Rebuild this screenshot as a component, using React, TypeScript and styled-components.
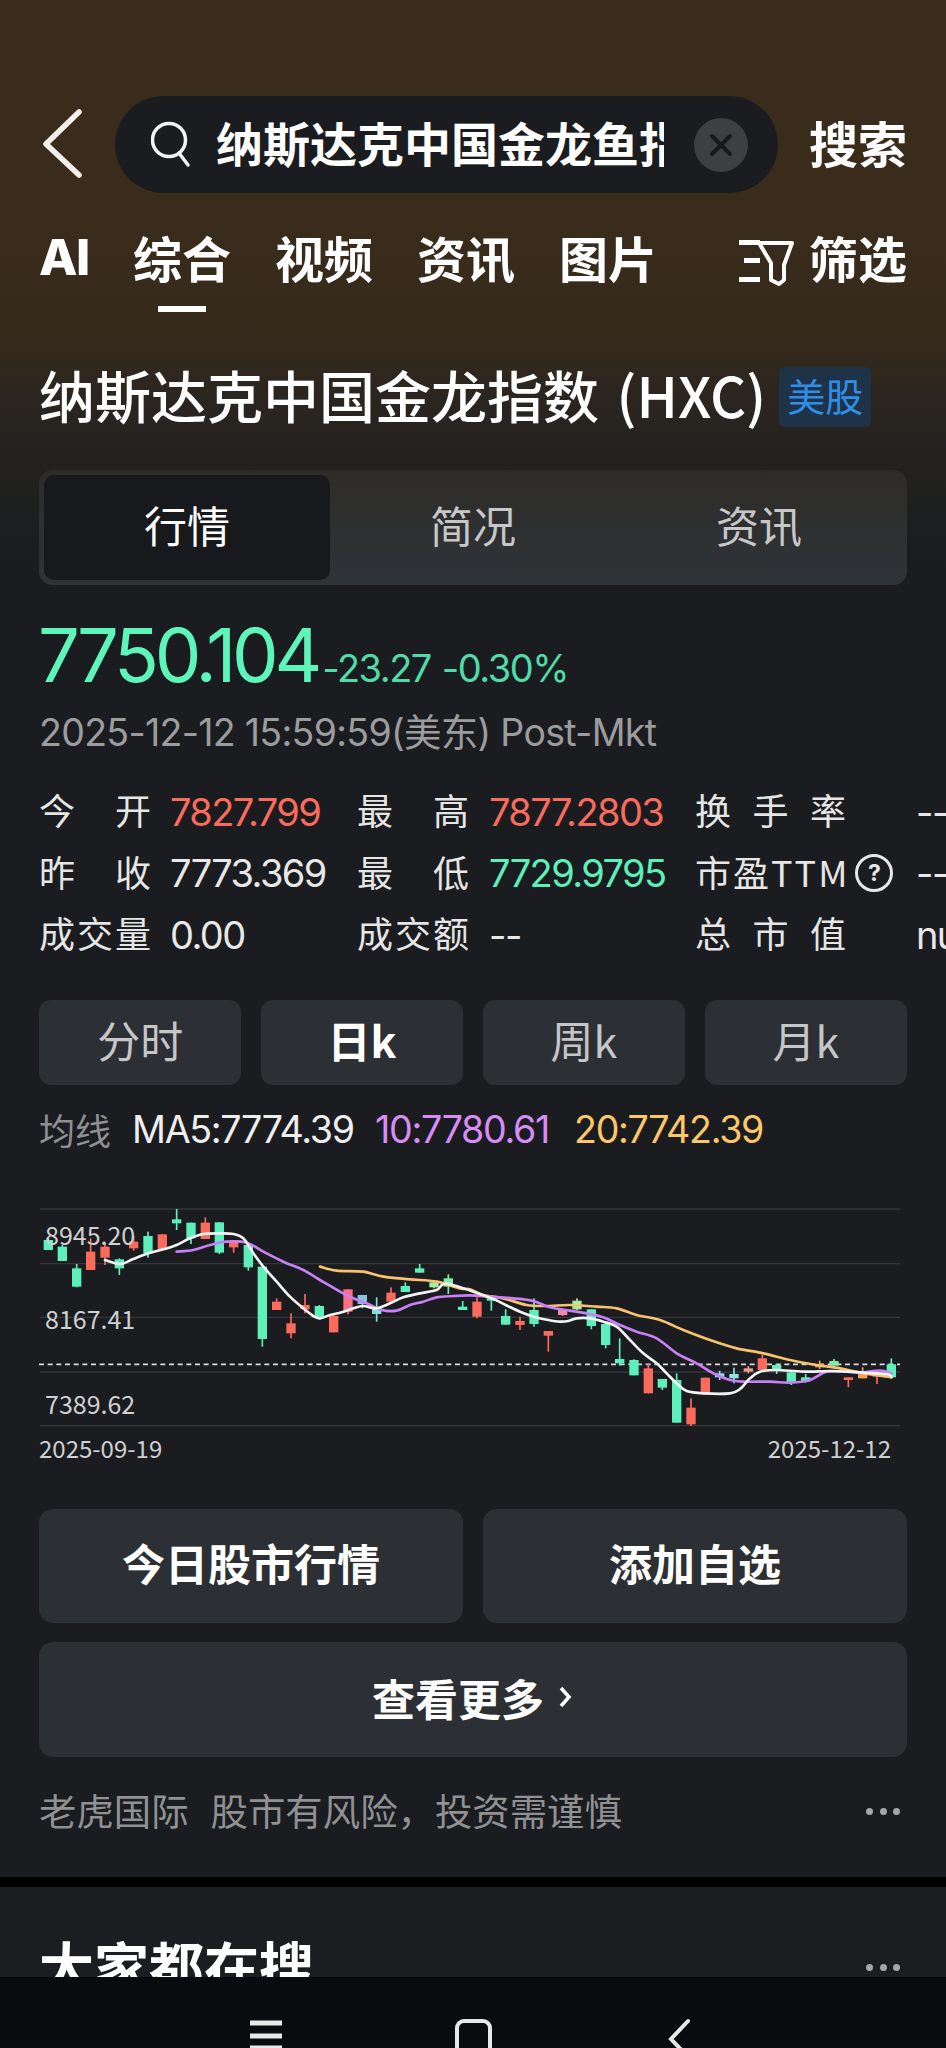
import React from "react";
import styled, { createGlobalStyle } from "styled-components";

const CJK = '"Noto Sans CJK SC", sans-serif';
const NUM = 'Inter, "Noto Sans CJK SC", sans-serif';

const Global = createGlobalStyle`
  html, body { margin: 0; padding: 0; background: #0a0b0e; }
  * { box-sizing: border-box; }
`;

const Page = styled.div`
  width: 946px; height: 2048px; overflow: hidden;
  display: flex; flex-direction: column;
  font-family: ${CJK}; color: #fff;
`;
const Main = styled.main`
  flex: none; height: 1977px; overflow: hidden;
  background: linear-gradient(180deg, #3a2c1c 0, #3a2c1b 200px, #352a1b 340px, #2b2520 400px, #22211f 470px, #1b1d20 540px, #1a1c20 600px);
`;
const Card = styled.section`
  padding: 96px 39px 0; height: 1877px;
`;
const SearchRow = styled.div`
  display: flex; align-items: center; height: 97px;
`;
const BackIcon = styled.svg`
  flex: none; width: 76px; height: 97px; margin-right: 0;
`;
const SearchBar = styled.div`
  flex: none; width: 663px; height: 97px; border-radius: 49px; background: #1a1c20;
  display: flex; align-items: center; padding: 0 30px 0 36px;
`;
const SearchIcon = styled.svg`
  flex: none; width: 40px; height: 50px; margin-right: 25px;
`;
const SearchText = styled.div`
  width: 449px; overflow: hidden; white-space: nowrap; font-size: 47px; font-weight: 700; line-height: 91px; margin-bottom: 6px;
`;
const Clear = styled.div`
  flex: none; width: 54px; height: 54px; border-radius: 50%; background: #3d3f42; margin-left: 30px;
  display: flex; align-items: center; justify-content: center;
`;
const SearchAction = styled.div`
  flex: none; margin-left: 31px; font-size: 49px; font-weight: 700; line-height: 91px; margin-bottom: 6px;
`;
const TabsRow = styled.div`
  display: flex; align-items: center; height: 60px; margin-top: 34px; position: relative;
`;
const AiTab = styled.div`
  width: 94px; font-family: Inter, sans-serif; font-size: 50px; font-weight: 800; letter-spacing: -1.5px; line-height: 60px;
`;
const Tab = styled.div<{ $active?: boolean }>`
  width: 142px; font-size: 49px; font-weight: 700; line-height: 60px; position: relative; white-space: nowrap;
  ${(p) => p.$active && `
    &::after { content: ""; position: absolute; left: 25px; top: 79px; width: 48px; height: 6px; background: #fff; }
  `}
`;
const FilterWrap = styled.div`
  margin-left: auto; display: flex; align-items: center; gap: 13px; font-size: 49px; font-weight: 700; line-height: 60px;
`;
const FilterIcon = styled.svg`
  flex: none; width: 58px; height: 52px; margin-top: 10px;
`;
const TitleRow = styled.div`
  display: flex; align-items: center; height: 70px; margin-top: 75px; gap: 13px;
`;
const Title = styled.h1`
  margin: 0 0 6px; font-size: 56px; font-weight: 500; line-height: 70px; white-space: nowrap; word-spacing: 5px;
`;
const Market = styled.span`
  width: 92px; height: 60px; border-radius: 6px; background: #1f3348; color: #2f8fe8; padding-bottom: 5px;
  font-size: 38px; display: flex; align-items: center; justify-content: center;
`;
const Segment = styled.div`
  display: grid; grid-template-columns: repeat(3, 1fr); margin-top: 38px; height: 115px; padding: 5px; border-radius: 14px;
  background: linear-gradient(180deg, #2e2c28, #2f3338);
`;
const SegItem = styled.div<{ $active?: boolean }>`
  display: flex; align-items: center; justify-content: center; border-radius: 10px; font-size: 43px; padding-bottom: 8px;
  background: ${(p) => (p.$active ? "#17191d" : "transparent")};
  color: ${(p) => (p.$active ? "#fff" : "#c6c7c8")};
`;
const PriceRow = styled.div`
  display: flex; align-items: baseline; height: 86px; margin-top: 27px; margin-left: -1px; font-family: ${NUM};
`;
const Price = styled.span`
  font-size: 74px; line-height: 86px; color: #5ef5bb; letter-spacing: -4.2px; font-weight: 400; margin-right: 4px;
`;
const Change = styled.span`
  font-size: 38px; color: #4fdca8; letter-spacing: -1.5px; margin-right: 11px;
`;
const DateLine = styled.div`
  font-family: ${NUM}; font-size: 37.5px; line-height: 50px; margin-top: 10px; color: #9a9c9e; letter-spacing: -0.7px; white-space: nowrap;
`;
const Stats = styled.div`
  display: grid; grid-template-columns: 131px 187px 132px 206px 221px 100px;
  grid-auto-rows: 61.5px; margin-top: 23px; width: 977px; font-size: 36px; align-items: center;
`;
const StatLabel = styled.div<{ $w?: number }>`
  width: ${(p) => p.$w ?? 112}px; text-align-last: justify; color: #e6e6e6; line-height: 50px; white-space: nowrap; padding-bottom: 5px;
`;
const PlainLabel = styled.div`
  display: flex; align-items: center; color: #e6e6e6; line-height: 50px; white-space: nowrap; letter-spacing: 2px; padding-bottom: 5px;
`;
const HelpIcon = styled.span`
  width: 38px; height: 38px; border: 3px solid #e6e6e6; border-radius: 50%; margin-left: 6px; margin-top: 5px; letter-spacing: 0;
  font-family: Inter, sans-serif; font-weight: 700; font-size: 23px; line-height: 32px; text-align: center; display: block;
`;
const StatValue = styled.div<{ $c?: string }>`
  font-family: ${NUM}; font-size: 38px; letter-spacing: -1.6px; line-height: 50px; color: ${(p) => p.$c ?? "#e8e8e8"}; white-space: nowrap;
`;
const Periods = styled.div`
  display: grid; grid-template-columns: repeat(4, 1fr); gap: 19.5px; margin-top: 34px;
`;
const Period = styled.div<{ $active?: boolean }>`
  height: 85px; border-radius: 12px; background: #2c2f33; display: flex; align-items: center; justify-content: center; padding-bottom: 6px;
  font-size: 43px; color: ${(p) => (p.$active ? "#fff" : "#c5c6c8")}; font-weight: ${(p) => (p.$active ? 700 : 400)};
`;
const MaRow = styled.div`
  display: flex; align-items: center; height: 50px; margin-top: 20px; font-size: 36px;
`;
const MaLabel = styled.span`
  color: #8e9092; margin-right: 21px; font-size: 36px; margin-bottom: 2px;
`;
const MaValue = styled.span<{ $c: string; $w: number }>`
  font-family: ${NUM}; width: ${(p) => p.$w}px; color: ${(p) => p.$c}; letter-spacing: -1.3px; font-size: 37.6px; white-space: nowrap;
`;
const ChartBox = styled.div`
  position: relative; margin-top: 35px; width: 880px; height: 240px;
`;
const ChartSvg = styled.svg`
  display: block; width: 880px; height: 240px;
`;
const AxisLabel = styled.span<{ $top: number }>`
  position: absolute; left: 6px; top: ${(p) => p.$top}px; font-family: "Noto Sans CJK SC", sans-serif; font-size: 25px; line-height: 30px; color: #cfd0d1;
`;
const DateRow = styled.div`
  display: flex; justify-content: space-between; width: 852px; height: 30px; margin-top: 3px;
  font-size: 24px; line-height: 30px; color: #cfd0d1;
`;
const ButtonRow = styled.div`
  display: grid; grid-template-columns: 1fr 1fr; gap: 20px; margin-top: 46px;
`;
const ActionButton = styled.div<{ $h?: number; $pb?: number }>`
  height: ${(p) => p.$h ?? 114}px; border-radius: 14px; background: #2c2f33; display: flex; align-items: center; justify-content: center;
  padding-bottom: ${(p) => p.$pb ?? 8}px;
  font-size: 43px; font-weight: 700; color: #fff; white-space: nowrap;
`;
const MoreButton = styled(ActionButton)`
  margin-top: 19px;
`;
const Chevron = styled.svg`
  width: 16px; height: 30px; margin-left: 14px;
`;
const FooterRow = styled.div`
  display: flex; align-items: center; height: 50px; margin-top: 30px;
  font-size: 37.4px; color: #8f9193; white-space: pre;
`;
const FooterText = styled.span<{ $gap?: number }>`
  padding-bottom: 4px; margin-left: ${(p) => p.$gap ?? 0}px;
`;
const Dots = styled.div`
  display: flex; gap: 6.5px; padding-right: 7px; margin-left: auto;
`;
const Dot = styled.i`
  width: 7px; height: 7px; border-radius: 50%; background: #a4a6a8; display: block;
`;
const Divider = styled.div`
  height: 10px; background: #000;
`;
const NextCard = styled.section`
  background: #1b1d21; padding: 42px 39px 0; height: 90px;
  display: flex; justify-content: space-between; align-items: flex-start;
`;
const NextTitle = styled.h2`
  margin: 0; font-size: 55px; font-weight: 700; line-height: 70px;
`;
const NextDots = styled(Dots)`
  margin-top: 35px;
`;
const NavBar = styled.nav`
  flex: none; height: 71px; background: #0a0b0e; overflow: hidden;
`;
const NavSvg = styled.svg`
  display: block; width: 946px; height: 71px;
`;

const G = "#5ef0bb";
const R = "#fb6b5c";
type C = [number, number, number, number, number, string];
// x, wickTop, wickBottom, bodyTop, bodyBottom, colour (3x chart units)
const candles: C[] = [
  [85, 145, 180, 150, 180, G], [127, 165, 213, 170, 213, G], [170, 222, 292, 235, 290, G], [212, 145, 240, 185, 240, R],
  [255, 158, 225, 170, 203, R], [298, 205, 255, 208, 235, G], [341, 138, 182, 155, 175, R], [384, 125, 203, 138, 190, G],
  [427, 133, 178, 133, 178, R], [470, 57, 120, 88, 100, G], [513, 98, 162, 98, 145, G], [556, 82, 147, 98, 147, R],
  [598, 97, 192, 97, 188, G], [641, 150, 188, 152, 172, R], [685, 160, 242, 165, 232, G], [727, 230, 470, 230, 447, G],
  [770, 325, 360, 335, 360, R], [813, 370, 445, 400, 430, R], [855, 312, 370, 345, 358, R], [898, 345, 388, 348, 385, G],
  [941, 375, 427, 378, 427, R], [984, 298, 373, 298, 365, "#fb6f80"], [1027, 315, 355, 315, 342, "#7fc8e0"], [1070, 322, 395, 350, 372, "#7fe0d8"],
  [1113, 292, 338, 308, 335, R], [1156, 277, 306, 288, 306, G], [1199, 222, 248, 235, 248, G], [1242, 270, 295, 277, 292, "#a5eea0"],
  [1285, 253, 312, 265, 290, "#7ef0a8"], [1328, 333, 360, 350, 360, G], [1371, 322, 385, 335, 380, R],
  ...([
    [64, 315, 362, 325, 332, G], [107, 358, 404, 378, 404, G], [150, 380, 420, 393, 405, R], [192, 325, 410, 360, 402, G],
    [235, 423, 485, 423, 437, R], [278, 358, 378, 358, 375, "#f08ca0"], [321, 325, 360, 332, 358, "#a5eea0"], [364, 358, 418, 358, 408, G],
    [407, 400, 475, 402, 465, G], [449, 445, 527, 507, 520, G], [492, 508, 556, 510, 556, G], [535, 522, 610, 535, 610, R],
    [577, 567, 600, 567, 593, G], [620, 550, 698, 570, 698, G], [663, 625, 708, 653, 703, R], [706, 563, 610, 563, 610, R],
    [749, 542, 570, 550, 562, "#8fd8f0"], [792, 533, 580, 552, 565, "#8fe8e0"], [835, 528, 550, 535, 545, "#f59a90"], [877, 495, 540, 505, 540, R],
    [920, 522, 552, 525, 540, G], [964, 547, 585, 547, 578, G], [1007, 552, 578, 562, 575, G], [1049, 512, 537, 522, 532, "#f5a050"],
    [1092, 507, 527, 513, 527, "#7ef0a8"], [1135, 562, 592, 562, 570, R], [1178, 532, 565, 545, 565, "#f5a050"], [1221, 540, 582, 555, 560, R],
    [1264, 505, 566, 523, 562, G],
  ] as C[]).map((c): C => [c[0] + 1350, c[1], c[2], c[3], c[4], c[5]]),
];

type P = [number, number];
const shift = (a: P[]): P[] => a.map(([x, y]) => [x + 1350, y]);
const smooth = (pts: P[]) => {
  let d = `M${pts[0][0]} ${pts[0][1]}`;
  for (let i = 0; i < pts.length - 1; i++) {
    const p0 = pts[Math.max(i - 1, 0)], p1 = pts[i], p2 = pts[i + 1], p3 = pts[Math.min(i + 2, pts.length - 1)];
    d += `C${p1[0] + (p2[0] - p0[0]) / 6} ${p1[1] + (p2[1] - p0[1]) / 6} ${p2[0] - (p3[0] - p1[0]) / 6} ${p2[1] - (p3[1] - p1[1]) / 6} ${p2[0]} ${p2[1]}`;
  }
  return d;
};
const ma5: P[] = [
  [255, 210], [300, 222], [340, 207], [385, 190], [430, 178], [470, 165], [510, 145], [550, 132], [600, 130], [640, 132], [670, 145], [700, 190], [730, 230],
  [770, 275], [810, 320], [850, 355], [880, 378], [900, 385], [930, 375], [965, 367], [1000, 355], [1030, 348], [1070, 355], [1110, 340], [1150, 322], [1200, 310], [1250, 300], [1285, 282],
  ...shift([[64, 325], [107, 345], [150, 365], [192, 380], [235, 390], [270, 395], [295, 393], [320, 385], [360, 385], [400, 395], [440, 410], [480, 450], [520, 490], [560, 520], [590, 550], [620, 580], [650, 603], [700, 610], [780, 610], [810, 597], [840, 565], [870, 545], [920, 540], [1000, 545], [1080, 543], [1140, 545], [1180, 548], [1250, 552], [1265, 560]]),
];
const ma10: P[] = [
  [470, 185], [520, 180], [570, 165], [620, 155], [680, 158], [730, 185], [790, 215], [850, 240], [900, 270], [960, 305], [1000, 325], [1040, 340], [1085, 360], [1130, 362], [1170, 345], [1210, 335], [1250, 322], [1300, 318], [1350, 316],
  ...shift([[60, 320], [130, 325], [190, 333], [240, 352], [300, 362], [350, 370], [400, 382], [450, 405], [500, 425], [560, 445], [620, 490], [680, 520], [730, 550], [780, 570], [820, 575], [900, 575], [960, 578], [1020, 570], [1070, 545], [1130, 545], [1170, 548], [1230, 542], [1265, 550]]),
];
const ma20: P[] = [
  [900, 230], [950, 242], [1030, 245], [1090, 260], [1170, 268], [1250, 275], [1320, 295],
  ...shift([[0, 298], [40, 315], [100, 325], [170, 345], [230, 348], [300, 345], [380, 350], [440, 355], [500, 375], [570, 390], [640, 420], [720, 450], [800, 475], [880, 490], [960, 510], [1040, 525], [1110, 535], [1170, 548], [1265, 562]]),
];

const Chart = () => (
  <ChartSvg viewBox="57 0 2640 720">
    {[57, 221, 382, 546, 707].map((y) => (
      <line key={y} x1="60" x2="2640" y1={y} y2={y} stroke="#34373a" strokeWidth="4" />
    ))}
    <line x1="57" x2="2640" y1="523" y2="523" stroke="#d8d9da" strokeWidth="5" strokeDasharray="15 11" />
    {candles.map(([x, wt, wb, bt, bb, c]) => (
      <g key={x} fill={c}>
        <rect x={x - 2.5} y={wt} width="5" height={wb - wt} />
        <rect x={x - 14} y={bt} width="28" height={bb - bt} />
      </g>
    ))}
    <path d={smooth(ma20)} fill="none" stroke="#f9c26e" strokeWidth="8" strokeLinecap="round" />
    <path d={smooth(ma10)} fill="none" stroke="#c97ff5" strokeWidth="8" strokeLinecap="round" />
    <path d={smooth(ma5)} fill="none" stroke="#f2f4f3" strokeWidth="8" strokeLinecap="round" />
  </ChartSvg>
);

const MoreDots = ({ as: W = Dots }: { as?: typeof Dots }) => (
  <W>
    <Dot />
    <Dot />
    <Dot />
  </W>
);

export default function App() {
  return (
    <Page>
      <Global />
      <Main>
        <Card>
          <SearchRow>
            <BackIcon viewBox="0 0 76 97">
              <path d="M40 16 7 48 40 79" fill="none" stroke="#f2f0ea" strokeWidth="5.5" strokeLinecap="round" strokeLinejoin="round" />
            </BackIcon>
            <SearchBar>
              <SearchIcon viewBox="0 0 40 50">
                <circle cx="18" cy="20" r="16.5" fill="none" stroke="#f2f2f2" strokeWidth="3.5" />
                <path d="M28 33 37 45" stroke="#f2f2f2" strokeWidth="3.5" strokeLinecap="round" />
              </SearchIcon>
              <SearchText>纳斯达克中国金龙鱼指数</SearchText>
              <Clear>
                <svg width="24" height="24" viewBox="0 0 24 24">
                  <path d="M3 3 21 21M21 3 3 21" stroke="#17191c" strokeWidth="4" strokeLinecap="round" />
                </svg>
              </Clear>
            </SearchBar>
            <SearchAction>搜索</SearchAction>
          </SearchRow>
          <TabsRow>
            <AiTab>AI</AiTab>
            <Tab $active>综合</Tab>
            <Tab>视频</Tab>
            <Tab>资讯</Tab>
            <Tab>图片</Tab>
            <FilterWrap>
              <FilterIcon viewBox="0 0 58 52">
                <path d="M1 6.5H22M6 24.5H22M1 43.5H22" stroke="#fff" strokeWidth="5" />
                <path d="M21 7H54L46 29V44L41 48 33 44V27Z" fill="none" stroke="#fff" strokeWidth="4" strokeLinejoin="round" />
              </FilterIcon>
              筛选
            </FilterWrap>
          </TabsRow>
          <TitleRow>
            <Title>纳斯达克中国金龙指数 (HXC)</Title>
            <Market>美股</Market>
          </TitleRow>
          <Segment>
            <SegItem $active>行情</SegItem>
            <SegItem>简况</SegItem>
            <SegItem>资讯</SegItem>
          </Segment>
          <PriceRow>
            <Price>7750.104</Price>
            <Change>-23.27</Change>
            <Change>-0.30%</Change>
          </PriceRow>
          <DateLine>2025-12-12 15:59:59(美东) Post-Mkt</DateLine>
          <Stats>
            <StatLabel>今开</StatLabel>
            <StatValue $c="#fb6b5c">7827.799</StatValue>
            <StatLabel>最高</StatLabel>
            <StatValue $c="#fb6b5c">7877.2803</StatValue>
            <StatLabel $w={151}>换手率</StatLabel>
            <StatValue>--</StatValue>
            <StatLabel>昨收</StatLabel>
            <StatValue>7773.369</StatValue>
            <StatLabel>最低</StatLabel>
            <StatValue $c="#5ef0bb">7729.9795</StatValue>
            <PlainLabel>
              市盈TTM<HelpIcon>?</HelpIcon>
            </PlainLabel>
            <StatValue>--</StatValue>
            <StatLabel>成交量</StatLabel>
            <StatValue>0.00</StatValue>
            <StatLabel>成交额</StatLabel>
            <StatValue>--</StatValue>
            <StatLabel $w={151}>总市值</StatLabel>
            <StatValue>null</StatValue>
          </Stats>
          <Periods>
            <Period>分时</Period>
            <Period $active>日k</Period>
            <Period>周k</Period>
            <Period>月k</Period>
          </Periods>
          <MaRow>
            <MaLabel>均线</MaLabel>
            <MaValue $c="#eeeeee" $w={243}>MA5:7774.39</MaValue>
            <MaValue $c="#d98cf5" $w={199}>10:7780.61</MaValue>
            <MaValue $c="#fbc768" $w={190}>20:7742.39</MaValue>
          </MaRow>
          <ChartBox>
            <Chart />
            <AxisLabel $top={29}>8945.20</AxisLabel>
            <AxisLabel $top={113}>8167.41</AxisLabel>
            <AxisLabel $top={198}>7389.62</AxisLabel>
          </ChartBox>
          <DateRow>
            <span>2025-09-19</span>
            <span>2025-12-12</span>
          </DateRow>
          <ButtonRow>
            <ActionButton>今日股市行情</ActionButton>
            <ActionButton>添加自选</ActionButton>
          </ButtonRow>
          <MoreButton $h={115} $pb={5}>
            查看更多
            <Chevron viewBox="0 0 16 30">
              <path d="M3 6 11 15 3 24" fill="none" stroke="#fff" strokeWidth="3.5" />
            </Chevron>
          </MoreButton>
          <FooterRow>
            <FooterText>老虎国际</FooterText>
            <FooterText $gap={22}>股市有风险，投资需谨慎</FooterText>
            <MoreDots />
          </FooterRow>
        </Card>
        <Divider />
        <NextCard>
          <NextTitle>大家都在搜</NextTitle>
          <MoreDots as={NextDots} />
        </NextCard>
      </Main>
      <NavBar>
        <NavSvg viewBox="0 0 946 71">
          <path d="M250 46H282M250 59H282M250 71H282" stroke="#e8e8e8" strokeWidth="5" />
          <rect x="457" y="44" width="33" height="50" rx="7" fill="none" stroke="#e8e8e8" strokeWidth="4" />
          <path d="M688 44 671 62 688 80" fill="none" stroke="#e8e8e8" strokeWidth="4" strokeLinecap="round" />
        </NavSvg>
      </NavBar>
    </Page>
  );
}
